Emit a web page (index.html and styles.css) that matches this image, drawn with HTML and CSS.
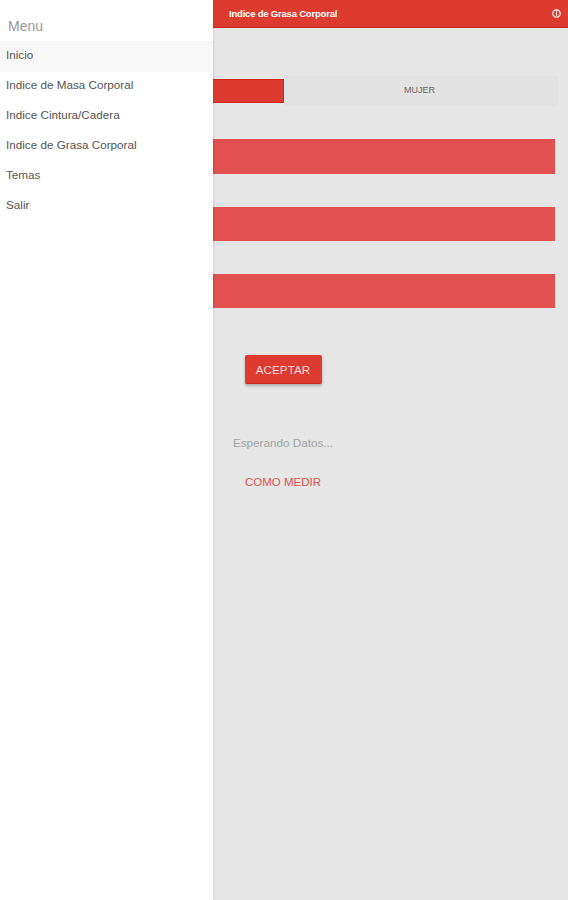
FILE: index.html
```html
<!DOCTYPE html>
<html lang="es">
<head>
<meta charset="utf-8">
<title>Indice de Grasa Corporal</title>
<link rel="stylesheet" href="styles.css">
</head>
<body>
<div class="app">
	<div class="drawer">
		<div class="drawer_title">Menu</div>
		<ul class="menu">
			<li class="active">Inicio</li>
			<li>Indice de Masa Corporal</li>
			<li>Indice Cintura/Cadera</li>
			<li>Indice de Grasa Corporal</li>
			<li>Temas</li>
			<li>Salir</li>
		</ul>
	</div>
	<div class="main">
		<div class="header">
			<span class="header_title">Indice de Grasa Corporal</span>
			<svg class="info" width="9" height="9" viewBox="0 0 9 9">
				<circle cx="4.5" cy="4.5" r="3.7" fill="none" stroke="#fff" stroke-width="1.2"/>
				<rect x="4" y="2.2" width="1" height="4.6" fill="#fff"/>
			</svg>
		</div>
		<div class="content">
			<div class="toggle">
				<div class="toggle_on"></div>
				<div class="toggle_off">MUJER</div>
			</div>
			<div class="field"></div>
			<div class="field"></div>
			<div class="field"></div>
			<div class="actions">
				<button class="btn">ACEPTAR</button>
				<div class="status">Esperando Datos...</div>
				<div class="link">COMO MEDIR</div>
			</div>
		</div>
	</div>
</div>
</body>
</html>
```
FILE: styles.css
```css
html,body{margin:0;padding:0;height:100%;}
body{background:#e6e6e6;font-family:"Liberation Sans",Arial,sans-serif;}
.app{display:flex;width:568px;height:900px;overflow:hidden;}

.drawer{width:213px;flex:none;background:#fff;box-shadow:1px 0 2px rgba(0,0,0,.1);position:relative;}
.drawer_title{height:41px;box-sizing:border-box;padding:18px 0 0 8px;font-size:14px;line-height:16px;color:#999;}
.menu{list-style:none;margin:0;padding:0;}
.menu li{height:30px;line-height:26px;padding-left:6px;font-size:11.7px;color:#555;}
.menu li.active{background:#f8f8f8;height:31px;line-height:27px;}

.main{flex:1;min-width:0;}
.header{height:27px;background:#dd3b2f;border-bottom:1px solid #c9281c;display:flex;align-items:center;justify-content:space-between;padding:0 7px 0 16px;}
.header_title{font-size:9.5px;font-weight:bold;color:#fff;letter-spacing:-.2px;}
.info{display:block;}

.content{padding:48px 10px 0 0;}
.toggle{display:flex;height:30px;}
.toggle_on{width:71px;height:24px;margin-top:3px;box-sizing:border-box;background:#dd3b2f;border:1px solid #d0261b;border-left:0;}
.toggle_off{flex:1;box-sizing:border-box;padding-right:3px;background:#e2e2e2;font-size:9px;line-height:29px;text-align:center;color:#666;}
.field{height:34px;margin:33px 3px 0 0;background:#e35050;}
.toggle + .field{height:35px;}

.actions{width:140px;display:flex;flex-direction:column;align-items:center;margin-top:47px;}
.btn{width:77px;height:29px;padding:0;border:0;border-radius:2px;background:#dd3b2f;border-bottom:1px solid #c9281c;box-shadow:0 2px 3px rgba(0,0,0,.25);color:#f7dcd9;font:11.7px "Liberation Sans",Arial,sans-serif;}
.status{margin-top:52px;font-size:11.7px;line-height:14px;color:#a3a3a3;white-space:nowrap;}
.link{margin-top:25px;font-size:11.5px;line-height:14px;color:#e0534a;white-space:nowrap;}
```
